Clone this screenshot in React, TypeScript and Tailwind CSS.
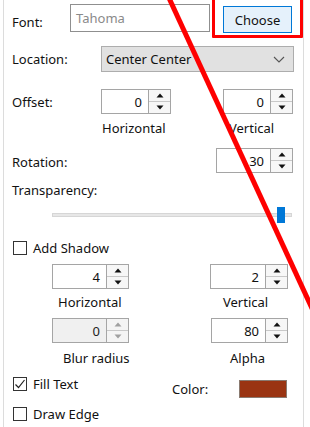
import React from "react";

const Spin = ({ value, width, disabled }: { value: string; width: string; disabled?: boolean }) => (
  <div className={`flex h-[25px] ${width}`}>
    <div className={`flex-1 flex items-center justify-end pr-[6px] border border-[#a5a5a5] ${disabled ? "bg-[#f0f0f0]" : "bg-white"}`}>
      <span className={disabled ? "text-[#222]" : "text-[#111]"}>{value}</span>
    </div>
    <div className={`w-[22px] flex flex-col border-y border-r border-[#a5a5a5] ${disabled ? "bg-[#f4f4f4]" : "bg-[#f7f7f7]"}`}>
      <div className="flex-1 flex items-center justify-center border-b border-[#c8c8c8]">
        <svg width="8" height="5" viewBox="0 0 8 5"><path d="M4 0.5 L7.5 4.5 L0.5 4.5 Z" fill={disabled ? "#a0a0a0" : "#111"} /></svg>
      </div>
      <div className="flex-1 flex items-center justify-center">
        <svg width="8" height="5" viewBox="0 0 8 5"><path d="M0.5 0.5 L7.5 0.5 L4 4.5 Z" fill={disabled ? "#a0a0a0" : "#111"} /></svg>
      </div>
    </div>
  </div>
);

const Check = ({ checked }: { checked?: boolean }) => (
  <div className="w-[14px] h-[14px] border border-[#333] bg-white flex items-center justify-center shrink-0">
    {checked && (
      <svg width="12" height="12" viewBox="0 0 12 12">
        <path d="M1.5 6.5 L4.5 9.5 L10.5 2" stroke="#222" strokeWidth="1.2" fill="none" />
      </svg>
    )}
  </div>
);

export default function App() {
  return (
    <div
      className="relative w-[310px] h-[427px] overflow-hidden bg-white text-[13px] leading-[18px] text-[#111]"
      style={{ fontFamily: '"Noto Sans", "Liberation Sans", sans-serif' }}
    >
      <div className="ml-[3px] w-[301px] h-full border-x border-[#dcdcdc] pl-[8px]">
        {/* Font */}
        <div className="flex h-[37px] items-start">
          <span className="w-[58px] pt-[13px]">Font:</span>
          <div className="mt-[4px] w-[140px] h-[28px] border border-[#8f8f8f] flex items-center pl-[5px] text-[#8a8a8a]">Tahoma</div>
          <button className="ml-[13px] mt-[6px] w-[69px] h-[27px] bg-[#e5f1fb] border border-[#0078d7] flex items-center justify-center text-[#111]">
            Choose
          </button>
        </div>

        {/* Location */}
        <div className="flex h-[26px] mt-[9px] items-center">
          <span className="w-[89px]">Location:</span>
          <div className="w-[193px] h-[26px] bg-[#e1e1e1] border border-[#adadad] flex items-center justify-between pl-[4px] pr-[8px]">
            <span>Center Center</span>
            <svg width="12" height="7" viewBox="0 0 12 7">
              <path d="M1 1 L6 6 L11 1" stroke="#555" strokeWidth="1.1" fill="none" />
            </svg>
          </div>
        </div>

        {/* Offset */}
        <div className="flex h-[25px] mt-[17px] items-center">
          <span className="w-[89px]">Offset:</span>
          <Spin value="0" width="w-[70px]" />
          <div className="w-[52px]" />
          <Spin value="0" width="w-[70px]" />
        </div>
        <div className="flex h-[18px] mt-[5px]">
          <span className="ml-[90px] w-[126px]">Horizontal</span>
          <span className="ml-[1px]">Vertical</span>
        </div>

        {/* Rotation */}
        <div className="flex h-[25px] mt-[11px] items-center">
          <span className="w-[204px] pt-[3px]">Rotation:</span>
          <Spin value="30" width="w-[77px]" />
        </div>

        {/* Transparency */}
        <div className="h-[18px] mt-[8px]">Transparency:</div>
        <div className="relative h-[16px] mt-[8px] ml-[40px] w-[240px] flex items-center">
          <div className="w-full h-[4px] bg-[#e7e7e7] border border-[#d6d6d6]" />
          <div className="absolute left-[225px] top-0 w-[8px] h-[16px] bg-[#0078d7]" />
        </div>

        {/* Add Shadow */}
        <div className="flex h-[16px] mt-[17px] items-center gap-[6px] ml-[1px]">
          <Check />
          <span>Add Shadow</span>
        </div>
        <div className="flex h-[25px] mt-[8px]">
          <div className="ml-[40px]"><Spin value="4" width="w-[77px]" /></div>
          <div className="ml-[81px]"><Spin value="2" width="w-[78px]" /></div>
        </div>
        <div className="flex h-[18px] mt-[4px]">
          <span className="ml-[46px] w-[165px]">Horizontal</span>
          <span>Vertical</span>
        </div>
        <div className="flex h-[25px] mt-[7px]">
          <div className="ml-[40px]"><Spin value="0" width="w-[77px]" disabled /></div>
          <div className="ml-[82px]"><Spin value="80" width="w-[77px]" /></div>
        </div>
        <div className="flex h-[18px] mt-[6px]">
          <span className="ml-[51px] w-[167px]">Blur radius</span>
          <span>Alpha</span>
        </div>

        {/* Fill Text / Color */}
        <div className="flex h-[24px] mt-[8px]">
          <div className="flex items-center gap-[6px] ml-[1px] h-[16px] mt-[1px] w-[159px]">
            <Check checked />
            <span>Fill Text</span>
          </div>
          <span className="pt-[5px] w-[67px]">Color:</span>
          <div className="mt-[5px] w-[48px] h-[18px] bg-[#9a3412] border border-[#8a7a70]" />
        </div>

        {/* Draw Edge */}
        <div className="flex h-[16px] mt-[7px] items-center gap-[6px] ml-[1px]">
          <Check />
          <span>Draw Edge</span>
        </div>
      </div>

      {/* annotation overlay */}
      <div className="absolute left-[212px] top-[-3px] w-[91px] h-[41px] border-[3px] border-[#fe0000] rounded-[1px] pointer-events-none" />
      <svg className="absolute inset-0 pointer-events-none" width="310" height="427">
        <line x1="169" y1="-2" x2="322" y2="330" stroke="#fe0000" strokeWidth="5" />
      </svg>
    </div>
  );
}
